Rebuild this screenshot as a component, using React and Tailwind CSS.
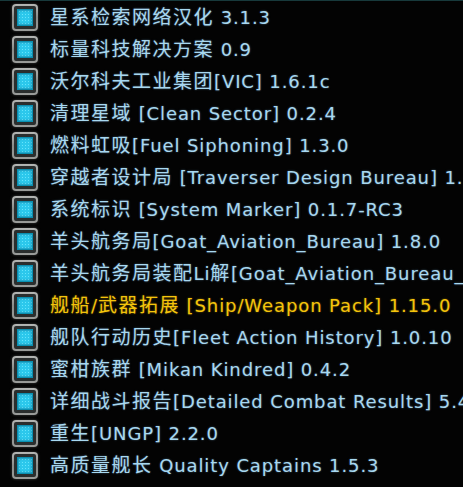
const mods = [
  { name: '星系检索网络汉化 3.1.3' },
  { name: '标量科技解决方案 0.9' },
  { name: '沃尔科夫工业集团[VIC] 1.6.1c' },
  { name: '清理星域 [Clean Sector] 0.2.4' },
  { name: '燃料虹吸[Fuel Siphoning] 1.3.0' },
  { name: '穿越者设计局 [Traverser Design Bureau] 1.6.0' },
  { name: '系统标识 [System Marker] 0.1.7-RC3' },
  { name: '羊头航务局[Goat_Aviation_Bureau] 1.8.0' },
  { name: '羊头航务局装配Li解[Goat_Aviation_Bureau_Lib] 1.0' },
  { name: '舰船/武器拓展 [Ship/Weapon Pack] 1.15.0', highlight: true },
  { name: '舰队行动历史[Fleet Action History] 1.0.10' },
  { name: '蜜柑族群 [Mikan Kindred] 0.4.2' },
  { name: '详细战斗报告[Detailed Combat Results] 5.4.0' },
  { name: '重生[UNGP] 2.2.0' },
  { name: '高质量舰长 Quality Captains 1.5.3' },
];

// CJK runs are set a bit larger and wider than the latin runs, like the game font
function ModName({ text }) {
  const parts = text.split(/([\u3000-\u9fff]+)/).filter(Boolean);
  return parts.map((p, i) =>
    /[\u3000-\u9fff]/.test(p) ? (
      <span key={i} className="text-[19px] tracking-[1.5px]">{p}</span>
    ) : (
      <span key={i} className="text-[18px] tracking-[0.9px]">{p}</span>
    )
  );
}

function Checkbox() {
  return (
    <div className="w-[26px] h-[27px] shrink-0 rounded-[4px] bg-gradient-to-b from-[#b4b6b4] via-[#8a8c8a] to-[#9a9c9a] p-[2px] shadow-[0_0_3px_rgba(160,160,160,0.4)]">
      <div className="w-full h-full rounded-[2px] bg-[#2a2e2e] p-[3px]">
        <div className="w-full h-full border border-[#0a8fb0] bg-[#2cc8ec] bg-[radial-gradient(circle,#66e4fb_0.8px,transparent_1px)] bg-[length:3px_3px] shadow-[inset_0_0_3px_rgba(0,60,90,0.6)]" />
      </div>
    </div>
  );
}

export default function App() {
  return (
    <div className="w-[463px] h-[487px] bg-[#030303] overflow-hidden border-t border-[#17393b]">
      {mods.map((mod, i) => (
        <div key={i} className="h-[32px] flex items-center pl-[12px] whitespace-nowrap">
          <Checkbox />
          <span
            className={`ml-[12px] leading-none font-['DejaVu_Sans','Noto_Sans_CJK_SC',sans-serif] ${
              mod.highlight
                ? 'text-[#f4c40c] [text-shadow:0_0_2px_rgba(244,196,12,0.5)]'
                : 'text-[#a8d8f0] [text-shadow:0_0_2px_rgba(140,200,240,0.5)]'
            }`}
          >
            <ModName text={mod.name} />
          </span>
        </div>
      ))}
    </div>
  );
}
